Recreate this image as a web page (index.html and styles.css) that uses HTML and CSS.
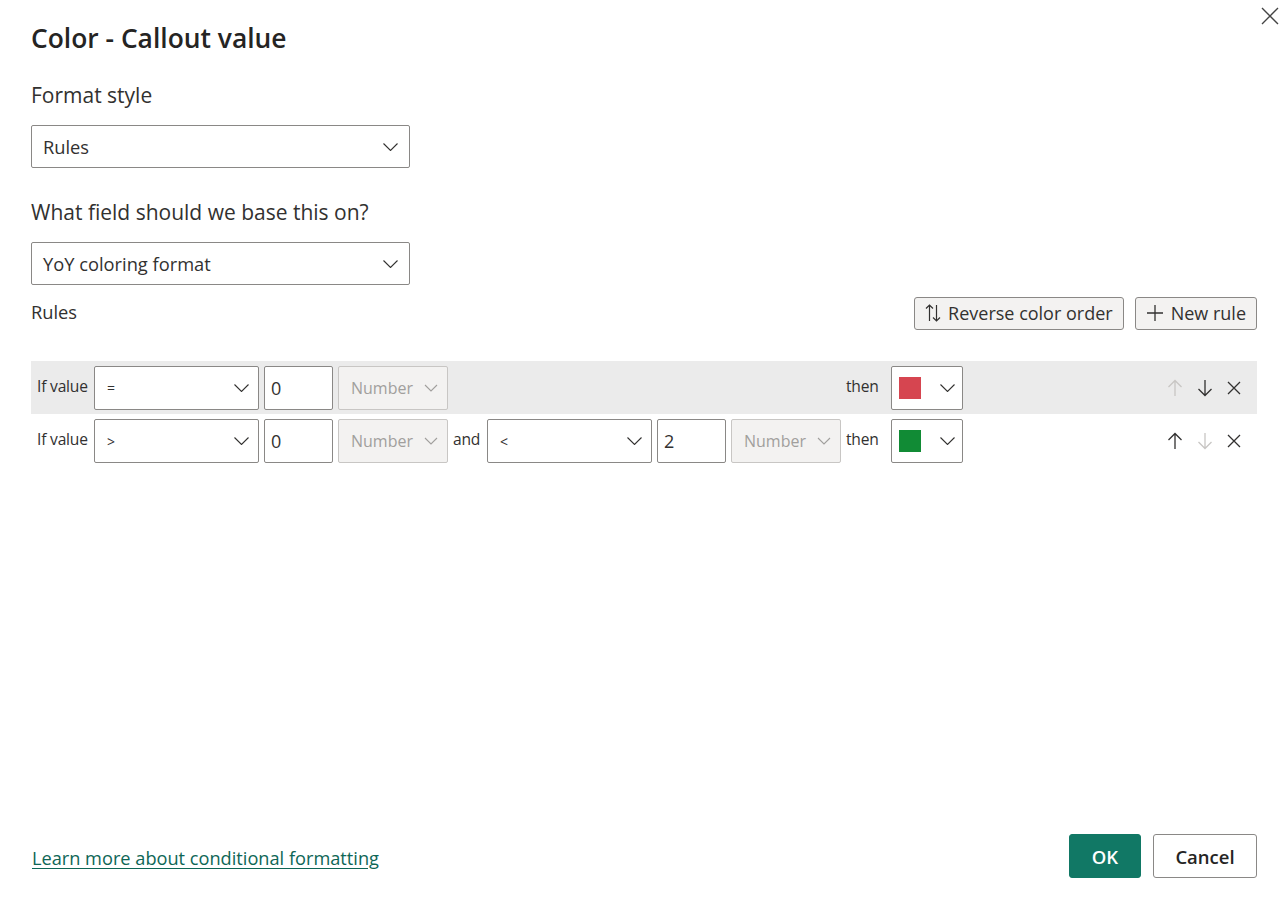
FILE: index.html
```html
<!DOCTYPE html>
<html lang="en">
<head>
<meta charset="utf-8">
<title>Color - Callout value</title>
<link rel="stylesheet" href="styles.css">
</head>
<body>
<div class="dialog">
  <button class="close" aria-label="Close">
    <svg width="18" height="18" viewBox="0 0 18 18"><path d="M1 1L17 17M17 1L1 17" stroke="#444" stroke-width="1.4" fill="none"/></svg>
  </button>
  <h1 class="title">Color - Callout value</h1>

  <div class="label">Format style</div>
  <div class="dropdown">
    <span>Rules</span>
    <svg class="chev" width="15" height="8" viewBox="0 0 15 8"><path d="M0.5 0.5L7.5 7.5L14.5 0.5" stroke="#323130" stroke-width="1.1" fill="none"/></svg>
  </div>

  <div class="label label2">What field should we base this on?</div>
  <div class="dropdown">
    <span>YoY coloring format</span>
    <svg class="chev" width="15" height="8" viewBox="0 0 15 8"><path d="M0.5 0.5L7.5 7.5L14.5 0.5" stroke="#323130" stroke-width="1.1" fill="none"/></svg>
  </div>

  <div class="rules-head">
    <div class="rules-label">Rules</div>
    <div class="head-actions">
      <button class="btn-sec">
        <svg width="16" height="18" viewBox="0 0 16 18"><path d="M4.5 17V1M1 4.5L4.5 1L8 4.5M11.5 1V17M8 13.5L11.5 17L15 13.5" stroke="#323130" stroke-width="1.2" fill="none"/></svg>
        Reverse color order
      </button>
      <button class="btn-sec">
        <svg width="18" height="18" viewBox="0 0 18 18"><path d="M9 1V17M1 9H17" stroke="#323130" stroke-width="1.3" fill="none"/></svg>
        New rule
      </button>
    </div>
  </div>

  <div class="rules">
    <div class="rule rule-active">
      <span class="txt">If value</span>
      <div class="sel"><span class="op">=</span><svg class="chev" width="15" height="8" viewBox="0 0 15 8"><path d="M0.5 0.5L7.5 7.5L14.5 0.5" stroke="#323130" stroke-width="1.1" fill="none"/></svg></div>
      <div class="inp">0</div>
      <div class="num"><span>Number</span><svg width="14" height="8" viewBox="0 0 14 8"><path d="M1 1L7 7L13 1" stroke="#a19f9d" stroke-width="1.1" fill="none"/></svg></div>
      <span class="txt"></span>
      <span></span>
      <span></span>
      <span></span>
      <span class="txt">then</span>
      <div class="color"><span class="swatch red"></span><svg class="chev" width="15" height="8" viewBox="0 0 15 8"><path d="M0.5 0.5L7.5 7.5L14.5 0.5" stroke="#323130" stroke-width="1.1" fill="none"/></svg></div>
      <span></span>
      <div class="acts">
        <svg class="dis" width="16" height="18" viewBox="0 0 16 18"><path d="M8 17V1.5M1.5 8L8 1.5L14.5 8" stroke="#c8c6c4" stroke-width="1.3" fill="none"/></svg>
        <svg width="16" height="18" viewBox="0 0 16 18"><path d="M8 1V16.5M1.5 10L8 16.5L14.5 10" stroke="#323130" stroke-width="1.3" fill="none"/></svg>
        <svg width="14" height="14" viewBox="0 0 14 14"><path d="M1 1L13 13M13 1L1 13" stroke="#323130" stroke-width="1.3" fill="none"/></svg>
      </div>
    </div>
    <div class="rule rule2">
      <span class="txt">If value</span>
      <div class="sel"><span class="op">&gt;</span><svg class="chev" width="15" height="8" viewBox="0 0 15 8"><path d="M0.5 0.5L7.5 7.5L14.5 0.5" stroke="#323130" stroke-width="1.1" fill="none"/></svg></div>
      <div class="inp">0</div>
      <div class="num"><span>Number</span><svg width="14" height="8" viewBox="0 0 14 8"><path d="M1 1L7 7L13 1" stroke="#a19f9d" stroke-width="1.1" fill="none"/></svg></div>
      <span class="txt">and</span>
      <div class="sel"><span class="op">&lt;</span><svg class="chev" width="15" height="8" viewBox="0 0 15 8"><path d="M0.5 0.5L7.5 7.5L14.5 0.5" stroke="#323130" stroke-width="1.1" fill="none"/></svg></div>
      <div class="inp">2</div>
      <div class="num"><span>Number</span><svg width="14" height="8" viewBox="0 0 14 8"><path d="M1 1L7 7L13 1" stroke="#a19f9d" stroke-width="1.1" fill="none"/></svg></div>
      <span class="txt">then</span>
      <div class="color"><span class="swatch green"></span><svg class="chev" width="15" height="8" viewBox="0 0 15 8"><path d="M0.5 0.5L7.5 7.5L14.5 0.5" stroke="#323130" stroke-width="1.1" fill="none"/></svg></div>
      <span></span>
      <div class="acts">
        <svg width="16" height="18" viewBox="0 0 16 18"><path d="M8 17V1.5M1.5 8L8 1.5L14.5 8" stroke="#323130" stroke-width="1.3" fill="none"/></svg>
        <svg class="dis" width="16" height="18" viewBox="0 0 16 18"><path d="M8 1V16.5M1.5 10L8 16.5L14.5 10" stroke="#c8c6c4" stroke-width="1.3" fill="none"/></svg>
        <svg width="14" height="14" viewBox="0 0 14 14"><path d="M1 1L13 13M13 1L1 13" stroke="#323130" stroke-width="1.3" fill="none"/></svg>
      </div>
    </div>
  </div>

  <div class="footer">
    <a class="learn" href="#">Learn more about conditional formatting</a>
    <div class="footer-btns">
      <button class="btn-ok">OK</button>
      <button class="btn-cancel">Cancel</button>
    </div>
  </div>
</div>
</body>
</html>
```
FILE: styles.css
```css
* { box-sizing: border-box; }
html, body { margin: 0; padding: 0; background: #fff; }
body {
  font-family: "Open Sans", "Noto Sans", "Liberation Sans", sans-serif;
  color: #252423;
}
.dialog {
  position: relative;
  height: 902px;
  padding: 21px 23px 24px 31px;
  display: flex;
  flex-direction: column;
}
.close {
  position: absolute;
  top: 7px;
  right: 1px;
  width: 18px;
  height: 18px;
  padding: 0;
  border: 0;
  background: none;
}
.title {
  margin: 0;
  font-size: 26.4px;
  line-height: 35px;
  font-weight: 600;
}
.label {
  margin-top: 25px;
  font-size: 21px;
  line-height: 28px;
  color: #323130;
}
.label2 { margin-top: 30px; }
.dropdown {
  margin-top: 16px;
  width: 379px;
  height: 43px;
  border: 1px solid #8a8886;
  border-radius: 2px;
  display: flex;
  align-items: center;
  justify-content: space-between;
  padding: 0 11px 0 11px;
  font-size: 18.3px;
  color: #323130;
}
.rules-head {
  margin-top: 12px;
  display: flex;
  align-items: center;
  justify-content: space-between;
  height: 32px;
}
.rules-label {
  font-size: 18.3px;
  color: #323130;
  margin-top: -4px;
}
.head-actions { display: flex; gap: 11px; }
.btn-sec {
  height: 33px;
  display: flex;
  align-items: center;
  gap: 7px;
  padding: 0 10px 0 10px;
  border: 1px solid #8a8886;
  border-radius: 3px;
  background: #f3f2f1;
  font-family: inherit;
  font-size: 18px;
  color: #323130;
}
.rules { margin-top: 32px; }
.rule {
  display: grid;
  grid-template-columns: 52px 165px 69px 110px 29px 165px 69px 110px 40px 72px 1fr auto;
  column-gap: 5px;
  align-items: center;
  height: 53px;
  padding: 0 16px 0 6px;
}
.rule2 { padding-top: 1px; }
.rule-active { background: #ebebeb; }
.txt {
  font-size: 15.6px;
  letter-spacing: -0.2px;
  white-space: nowrap;
  color: #323130;
  margin-top: -4px;
}
.sel, .inp, .num, .color {
  height: 44px;
  border: 1px solid #8a8886;
  border-radius: 2px;
  background: #fff;
  display: flex;
  align-items: center;
}
.sel { justify-content: space-between; padding: 0 9px 0 12px; }
.op { font-size: 14px; color: #323130; }
.inp { padding-left: 6px; font-size: 18px; color: #323130; }
.num {
  background: #f3f2f1;
  border-color: #c8c6c4;
  justify-content: space-between;
  padding: 0 9px 0 12px;
  font-size: 16px;
  color: #a19f9d;
}
.color { justify-content: space-between; padding: 0 7px 0 7px; }
.swatch { width: 22px; height: 22px; display: block; }
.red { background: #d64550; }
.green { background: #118b35; }
.acts { display: flex; align-items: center; gap: 14px; }
.footer {
  margin-top: auto;
  display: flex;
  align-items: center;
  justify-content: space-between;
}
.learn {
  margin-left: 1px;
  margin-top: 4px;
  font-size: 18.2px;
  color: #0e6656;
  text-decoration: underline;
  text-underline-offset: 3px;
}
.footer-btns { display: flex; gap: 12px; }
.btn-ok, .btn-cancel {
  height: 44px;
  border-radius: 3px;
  font-family: inherit;
  font-size: 18.5px;
  font-weight: 600;
}
.btn-ok {
  width: 72px;
  border: 1px solid #117865;
  background: #117865;
  color: #fff;
}
.btn-cancel {
  width: 104px;
  border: 1px solid #8a8886;
  background: #fff;
  color: #252423;
}
```
